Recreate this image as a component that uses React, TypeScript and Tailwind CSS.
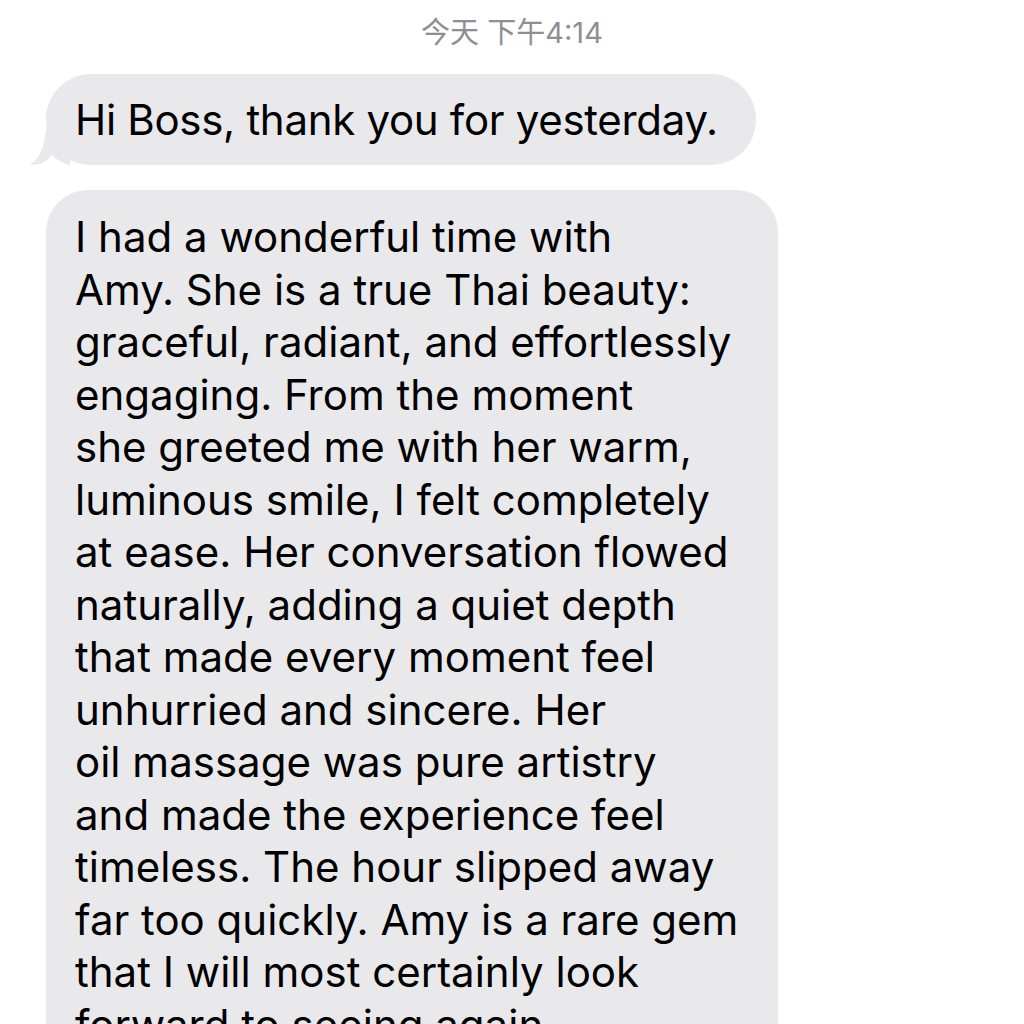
const lines = [
  'I had a wonderful time with',
  'Amy. She is a true Thai beauty:',
  'graceful, radiant, and effortlessly',
  'engaging. From the moment',
  'she greeted me with her warm,',
  'luminous smile, I felt completely',
  'at ease. Her conversation flowed',
  'naturally, adding a quiet depth',
  'that made every moment feel',
  'unhurried and sincere. Her',
  'oil massage was pure artistry',
  'and made the experience feel',
  'timeless. The hour slipped away',
  'far too quickly. Amy is a rare gem',
  'that I will most certainly look',
  'forward to seeing again.',
];

function Tail() {
  return (
    <svg className="absolute left-[-16px] bottom-0" width="40" height="36" viewBox="0 0 40 36">
      <path d="M16 0 L40 0 L40 36 C32 34 26 30 22 26 C16 34 8 36 0 36 C8 30 14 22 16 0 Z" fill="#e9e9eb" />
    </svg>
  );
}

export default function App() {
  return (
    <div className="w-[1024px] h-[1024px] overflow-hidden bg-white" style={{ fontFamily: 'Inter, "Noto Sans CJK SC", sans-serif' }}>
      <div className="pt-[14px] text-center text-[29px] leading-[38px] text-[#8e8e93]">
        今天 下午4:14
      </div>
      <div className="pl-[46px] pt-[22px] flex flex-col gap-[25px]">
        <div className="relative w-[710px]">
          <Tail />
          <div className="relative rounded-[45px] bg-[#e9e9eb] h-[91px] pl-[29px] flex items-center text-[42px] tracking-[-0.3px] text-black whitespace-nowrap">
            Hi Boss, thank you for yesterday.
          </div>
        </div>
        <div className="w-[732px] rounded-[42px] bg-[#e9e9eb] pl-[29px] pt-[21px] pb-[20px] text-[42px] leading-[52.5px] text-black">
          {lines.map((l) => (
            <div key={l} className="whitespace-nowrap">{l}</div>
          ))}
        </div>
      </div>
    </div>
  );
}
